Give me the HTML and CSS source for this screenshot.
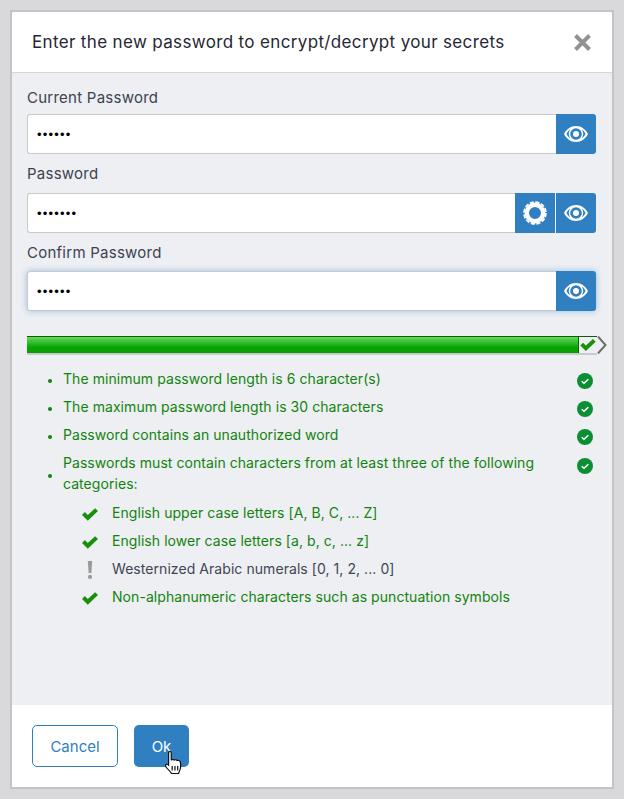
FILE: index.html
```html
<!DOCTYPE html>
<html lang="en">
<head>
    <meta charset="UTF-8">
    <meta name="viewport" content="width=device-width, initial-scale=1.0">
    <title>Change password</title>
    <link rel="stylesheet" href="styles.css">
</head>
<body>
    <svg class="sprites" width="0" height="0">
        <symbol id="eye" viewBox="0 0 24 16">
            <path fill="#fff" fill-rule="evenodd" d="M12 0C6.600 0 2.400 3.400 0 8c2.400 4.600 6.600 8 12 8s9.600-3.400 12-8c-2.400-4.600-6.600-8-12-8zM12 2.200A5.800 5.800 0 1 1 12 13.800 5.800 5.800 0 1 1 12 2.200zM6.200 3.600A8 8 0 0 0 6.200 12.400C4.700 11.500 3.400 9.900 2.500 8c.9-1.900 2.200-3.500 3.700-4.400zM17.800 3.600c1.500.9 2.800 2.500 3.700 4.400-.9 1.900-2.200 3.500-3.700 4.400A8 8 0 0 0 17.800 3.600zM12 5a3 3 0 1 0 0 6 3 3 0 1 0 0-6z"/>
        </symbol>
        <symbol id="check" viewBox="0 0 18 14">
            <path fill="#1a8f0a" d="M6.500 14 0 7.500 3.200 4.300 6.500 7.600 14.800 0 18 3.200z"/>
        </symbol>
        <symbol id="ok" viewBox="0 0 16 16">
            <circle cx="8" cy="8" r="8" fill="#0c8f33"/>
            <path fill="none" stroke="#fff" stroke-width="1.500" d="M4.700 8.200 7 10.300 11.300 6.200"/>
        </symbol>
    </svg>

    <div class="dialog">
        <header class="dialog-head">
            <h2>Enter the new password to encrypt/decrypt your secrets</h2>
            <svg class="close" width="17" height="17" viewBox="0 0 17 17"><path fill="none" stroke="#929292" stroke-width="4" d="M1.500 1.500 15.500 15.500M15.500 1.500 1.500 15.500"/></svg>
        </header>

        <div class="dialog-body">
            <label class="field-label first">Current Password</label>
            <div class="field">
                <input class="input" type="password" value="123456">
                <button class="addon" type="button"><svg width="24" height="16"><use href="#eye"/></svg></button>
            </div>

            <label class="field-label">Password</label>
            <div class="field">
                <input class="input" type="password" value="1234567">
                <button class="addon gen" type="button">
                    <svg width="24" height="24" viewBox="0 0 24 24">
                        <circle cx="12" cy="12" r="8.200" fill="none" stroke="#fff" stroke-width="4.400"/>
                        <circle cx="12" cy="12" r="11" fill="none" stroke="#fff" stroke-width="1.600" stroke-dasharray="4.200 1.560"/>
                    </svg>
                </button>
                <button class="addon" type="button"><svg width="24" height="16"><use href="#eye"/></svg></button>
            </div>

            <label class="field-label third">Confirm Password</label>
            <div class="field focused">
                <input class="input" type="password" value="123456">
                <button class="addon" type="button"><svg width="24" height="16"><use href="#eye"/></svg></button>
            </div>

            <div class="meter">
                <div class="meter-fill"></div>
                <div class="meter-end">
                    <svg width="16" height="12"><use href="#check"/></svg>
                </div>
                <svg class="meter-tip" width="10" height="18" viewBox="0 0 10 18"><path fill="none" stroke="#6d6d6d" stroke-width="2" d="M1 .5 8.500 9 1 17.500"/></svg>
            </div>

            <ul class="rules">
                <li class="rule"><div class="rule-row"><span class="rule-text">The minimum password length is 6 character(s)</span><svg width="16" height="16"><use href="#ok"/></svg></div></li>
                <li class="rule"><div class="rule-row"><span class="rule-text">The maximum password length is 30 characters</span><svg width="16" height="16"><use href="#ok"/></svg></div></li>
                <li class="rule"><div class="rule-row"><span class="rule-text">Password contains an unauthorized word</span><svg width="16" height="16"><use href="#ok"/></svg></div></li>
                <li class="rule rule-tall"><div class="rule-row"><span class="rule-text">Passwords must contain characters from at least three of the following categories:</span><svg width="16" height="16"><use href="#ok"/></svg></div></li>
            </ul>

            <ul class="cats">
                <li class="cat"><svg width="16" height="13"><use href="#check"/></svg><span class="cat-text">English upper case letters [A, B, C, ... Z]</span></li>
                <li class="cat"><svg width="16" height="13"><use href="#check"/></svg><span class="cat-text">English lower case letters [a, b, c, ... z]</span></li>
                <li class="cat cat-miss"><svg width="16" height="18" viewBox="0 0 16 18"><path fill="#9a9a9a" d="M5.800 0h4.400l-.8 12H6.600zM8 13.800a2.100 2.100 0 1 1 0 4.200 2.100 2.100 0 1 1 0-4.200z"/></svg><span class="cat-text">Westernized Arabic numerals [0, 1, 2, ... 0]</span></li>
                <li class="cat"><svg width="16" height="13"><use href="#check"/></svg><span class="cat-text">Non-alphanumeric characters such as punctuation symbols</span></li>
            </ul>
        </div>

        <footer class="dialog-foot">
            <button class="btn btn-cancel" type="button">Cancel</button>
            <button class="btn btn-ok" type="button">Ok
                <svg class="cursor" width="18" height="25" viewBox="0 0 15 25" preserveAspectRatio="none">
                    <path fill="#fff" stroke="#111" stroke-width="1" stroke-linejoin="round" d="M3 1.500c0-1.300 2.200-1.300 2.200 0V9c1.200-.9 2.200-.6 2.500.2.900-.7 2-.4 2.300.4 1-.5 2.300-.2 2.600.9.500 2 .6 5 .1 7.500-.3 1.600-.9 2.800-1.400 4.500H5.400C4.600 20.800 3 19 1.500 17 .4 15.500-.1 14.300.9 13.500c.8-.6 1.600 0 2.100.9z"/>
                    <path fill="none" stroke="#111" stroke-width="1" d="M6 15v4.500M8.300 15v4.500M10.600 15v4.500"/>
                </svg>
            </button>
        </footer>
    </div>
</body>
</html>
```

FILE: styles.css
```css
/* Page */
html, body {
    height: 100%;
}

body {
    margin: 0;
    padding: 10px;
    box-sizing: border-box;
    background: #d9d9db;
    font-family: Inter, Roboto, sans-serif;
    font-size: 14px;
    color: #333a45;
}

.sprites {
    display: block;
}

/* Dialog */
.dialog {
    height: 100%;
    width: 604px;
    box-sizing: border-box;
    border: 2px solid #c4c4c4;
    display: flex;
    flex-direction: column;
    background: #edeff3;
}

.dialog-head {
    height: 61px;
    flex: none;
    box-sizing: border-box;
    background: #fff;
    border-bottom: 1px solid #d4d6da;
    border-radius: 3px 3px 0 0;
    padding: 0 21px 0 20px;
    display: flex;
    align-items: center;
    justify-content: space-between;
}

.dialog-head h2 {
    margin: 0;
    font-size: 17px;
    letter-spacing: .35px;
    font-weight: 400;
    color: #1f2733;
}

.dialog-body {
    flex: 1;
    padding: 15px 15px 0;
}

.dialog-foot {
    height: 82px;
    flex: none;
    box-sizing: border-box;
    background: #fff;
    padding: 20px;
    display: flex;
    gap: 16px;
}

/* Fields */
.field-label {
    display: block;
    height: 29px;
    line-height: 20px;
    font-size: 15px;
    letter-spacing: .25px;
    color: #3c4350;
}

.first {
    height: 26px;
}

.third {
    height: 28px;
}

.field {
    display: flex;
    height: 40px;
    margin: 0 1px 10px 0;
    border-radius: 3px;
}

.field.focused {
    box-shadow: 0 0 6px rgba(50, 130, 200, .45);
}

.input {
    flex: 1;
    min-width: 0;
    box-sizing: border-box;
    border: 1px solid #c8c9cc;
    border-right: 0;
    border-radius: 3px 0 0 3px;
    background: #fff;
    padding: 0 9px;
    font-family: "Liberation Sans", sans-serif;
    font-size: 13px;
    letter-spacing: 1.200px;
    color: #000;
    outline: none;
}

.addon {
    width: 40px;
    padding: 0;
    border: 0;
    background: #2f7fc1;
    display: flex;
    align-items: center;
    justify-content: center;
}

.addon:last-child {
    border-radius: 0 3px 3px 0;
}

.gen {
    margin-right: 1px;
}

/* Strength meter */
.meter {
    display: flex;
    position: relative;
    box-sizing: border-box;
    height: 19px;
    margin-top: 25px;
    border-top: 1px solid #0b5d06;
    border-bottom: 2px solid #c9cacd;
}

.meter-fill {
    flex: 1;
    background: linear-gradient(#66d95c, #08a305 65%, #0a9e06);
    border-right: 1px solid #0b5d06;
}

.meter-end {
    width: 18px;
    background: #edeff3;
    display: flex;
    align-items: center;
    justify-content: center;
}

.meter-tip {
    position: absolute;
    right: -10px;
    top: -1px;
}

/* Rules */
.rules {
    margin: 12px 0 0;
    padding: 0 4px 0 36px;
    list-style: disc;
    color: #13830e;
    font-size: 14px;
    letter-spacing: .06px;
}

.rule {
    min-height: 28px;
}

.rule-row {
    display: inline-flex;
    vertical-align: middle;
    width: 100%;
    justify-content: space-between;
    align-items: center;
    min-height: 28px;
}

.rule-text {
    width: 490px;
    line-height: 21px;
    padding-bottom: 6px;
}

.rule-tall {
    margin-top: 1px;
}

.rule-tall .rule-row {
    align-items: flex-start;
}

.rule-tall svg {
    margin-top: 6px;
}

.rules li::marker {
    font-size: 12px;
}

.cats {
    margin: 0;
    padding: 0 0 0 55px;
    list-style: none;
    color: #13830e;
    font-size: 14px;
    letter-spacing: .06px;
}

.cat {
    height: 28px;
    display: flex;
    align-items: center;
    gap: 14px;
}

.cat svg {
    flex: none;
}

.cat-text {
    padding-bottom: 4px;
}

.cat-miss {
    color: #3f4652;
}

/* Buttons */
.btn {
    height: 42px;
    border-radius: 5px;
    font-family: Inter, Roboto, sans-serif;
    font-size: 15px;
    padding: 0;
}

.btn-cancel {
    width: 86px;
    background: #fff;
    border: 1px solid #2f7fc1;
    color: #2f7fc1;
}

.btn-ok {
    width: 55px;
    background: #2f7fc1;
    border: 0;
    color: #fff;
    position: relative;
}

.cursor {
    position: absolute;
    left: 31px;
    top: 26px;
}
```
